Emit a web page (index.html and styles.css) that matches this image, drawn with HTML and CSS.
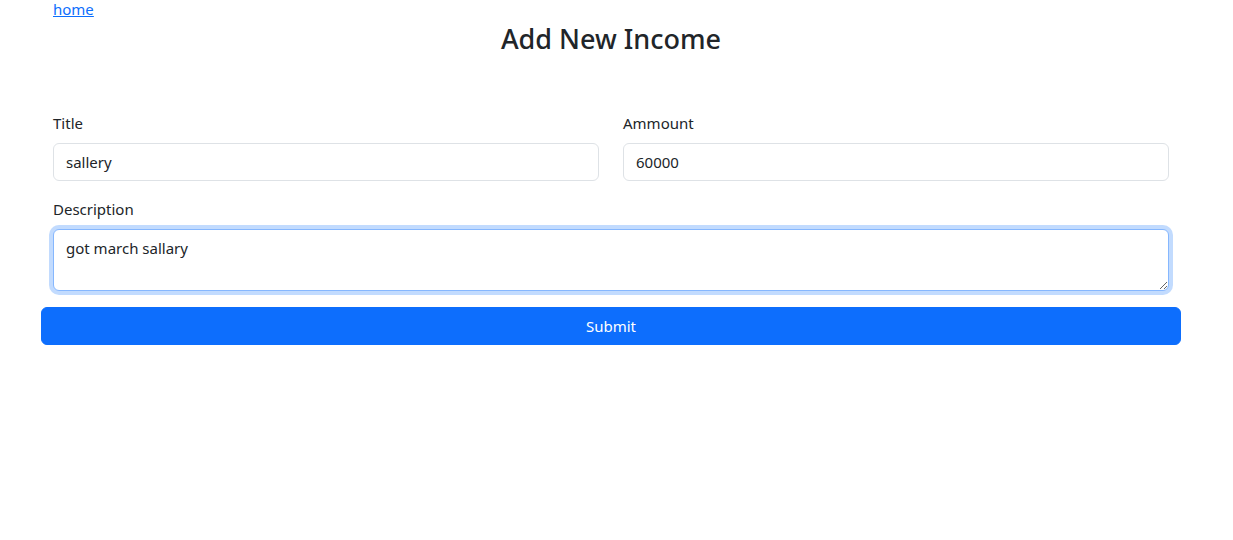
FILE: index.html
```html
<!DOCTYPE html>
<html lang="en">
<head>
<meta charset="utf-8">
<title>Add New Income</title>
<link rel="stylesheet" href="styles.css">
</head>
<body>
<div class="page">
  <div class="container">
    <a class="home-link" href="#">home</a>
    <h3 class="title">Add New Income</h3>
  </div>
  <form class="income-form">
    <div class="container">
      <div class="row">
        <div class="field">
          <label class="form-label" for="title">Title</label>
          <input class="form-control" id="title" type="text" value="sallery">
        </div>
        <div class="field">
          <label class="form-label" for="amount">Ammount</label>
          <input class="form-control" id="amount" type="text" value="60000">
        </div>
      </div>
      <div class="field full">
        <label class="form-label" for="desc">Description</label>
        <textarea class="form-control focused" id="desc" rows="2">got march sallary</textarea>
      </div>
    </div>
    <button class="btn-submit" type="button">Submit</button>
  </form>
</div>
</body>
</html>
```

FILE: styles.css
```css
* { box-sizing: border-box; }
html, body { margin: 0; padding: 0; background: #fff; }
body {
  font-family: "Noto Sans", "Liberation Sans", sans-serif;
  font-size: 16px;
  line-height: 1.5;
  color: #212529;
}
.page {
  width: 1140px;
  margin-left: 41px;
}
.container {
  padding: 0 12px;
}
.home-link {
  color: #0d6efd;
  text-decoration: underline;
  display: block;
  width: fit-content;
  font-size: 15px;
  line-height: 18px;
}
.title {
  margin: 5px 0 0;
  text-align: center;
  font-size: 27px;
  font-weight: 500;
  line-height: 1.2;
}
.income-form {
  margin-top: 56px;
}
.row {
  display: flex;
  gap: 24px;
}
.field {
  flex: 1;
  margin-bottom: 16px;
}
.form-label {
  display: block;
  margin-bottom: 8px;
  font-size: 15px;
  line-height: 24px;
}
.form-control {
  display: block;
  width: 100%;
  padding: 6px 12px;
  font-family: inherit;
  font-size: 15px;
  line-height: 24px;
  color: #212529;
  background: #fff;
  border: 1px solid #dee2e6;
  border-radius: 6px;
  outline: none;
  height: 38px;
}
textarea.form-control {
  height: 62px;
  resize: vertical;
}
.form-control.focused {
  border-color: #86b7fe;
  box-shadow: 0 0 0 4px rgba(13, 110, 253, 0.25);
}
.btn-submit {
  display: block;
  width: 100%;
  height: 38px;
  padding: 6px 12px;
  font-family: inherit;
  font-size: 15px;
  line-height: 24px;
  color: #fff;
  background: #0d6efd;
  border: 1px solid #0d6efd;
  border-radius: 6px;
  cursor: pointer;
}
```
